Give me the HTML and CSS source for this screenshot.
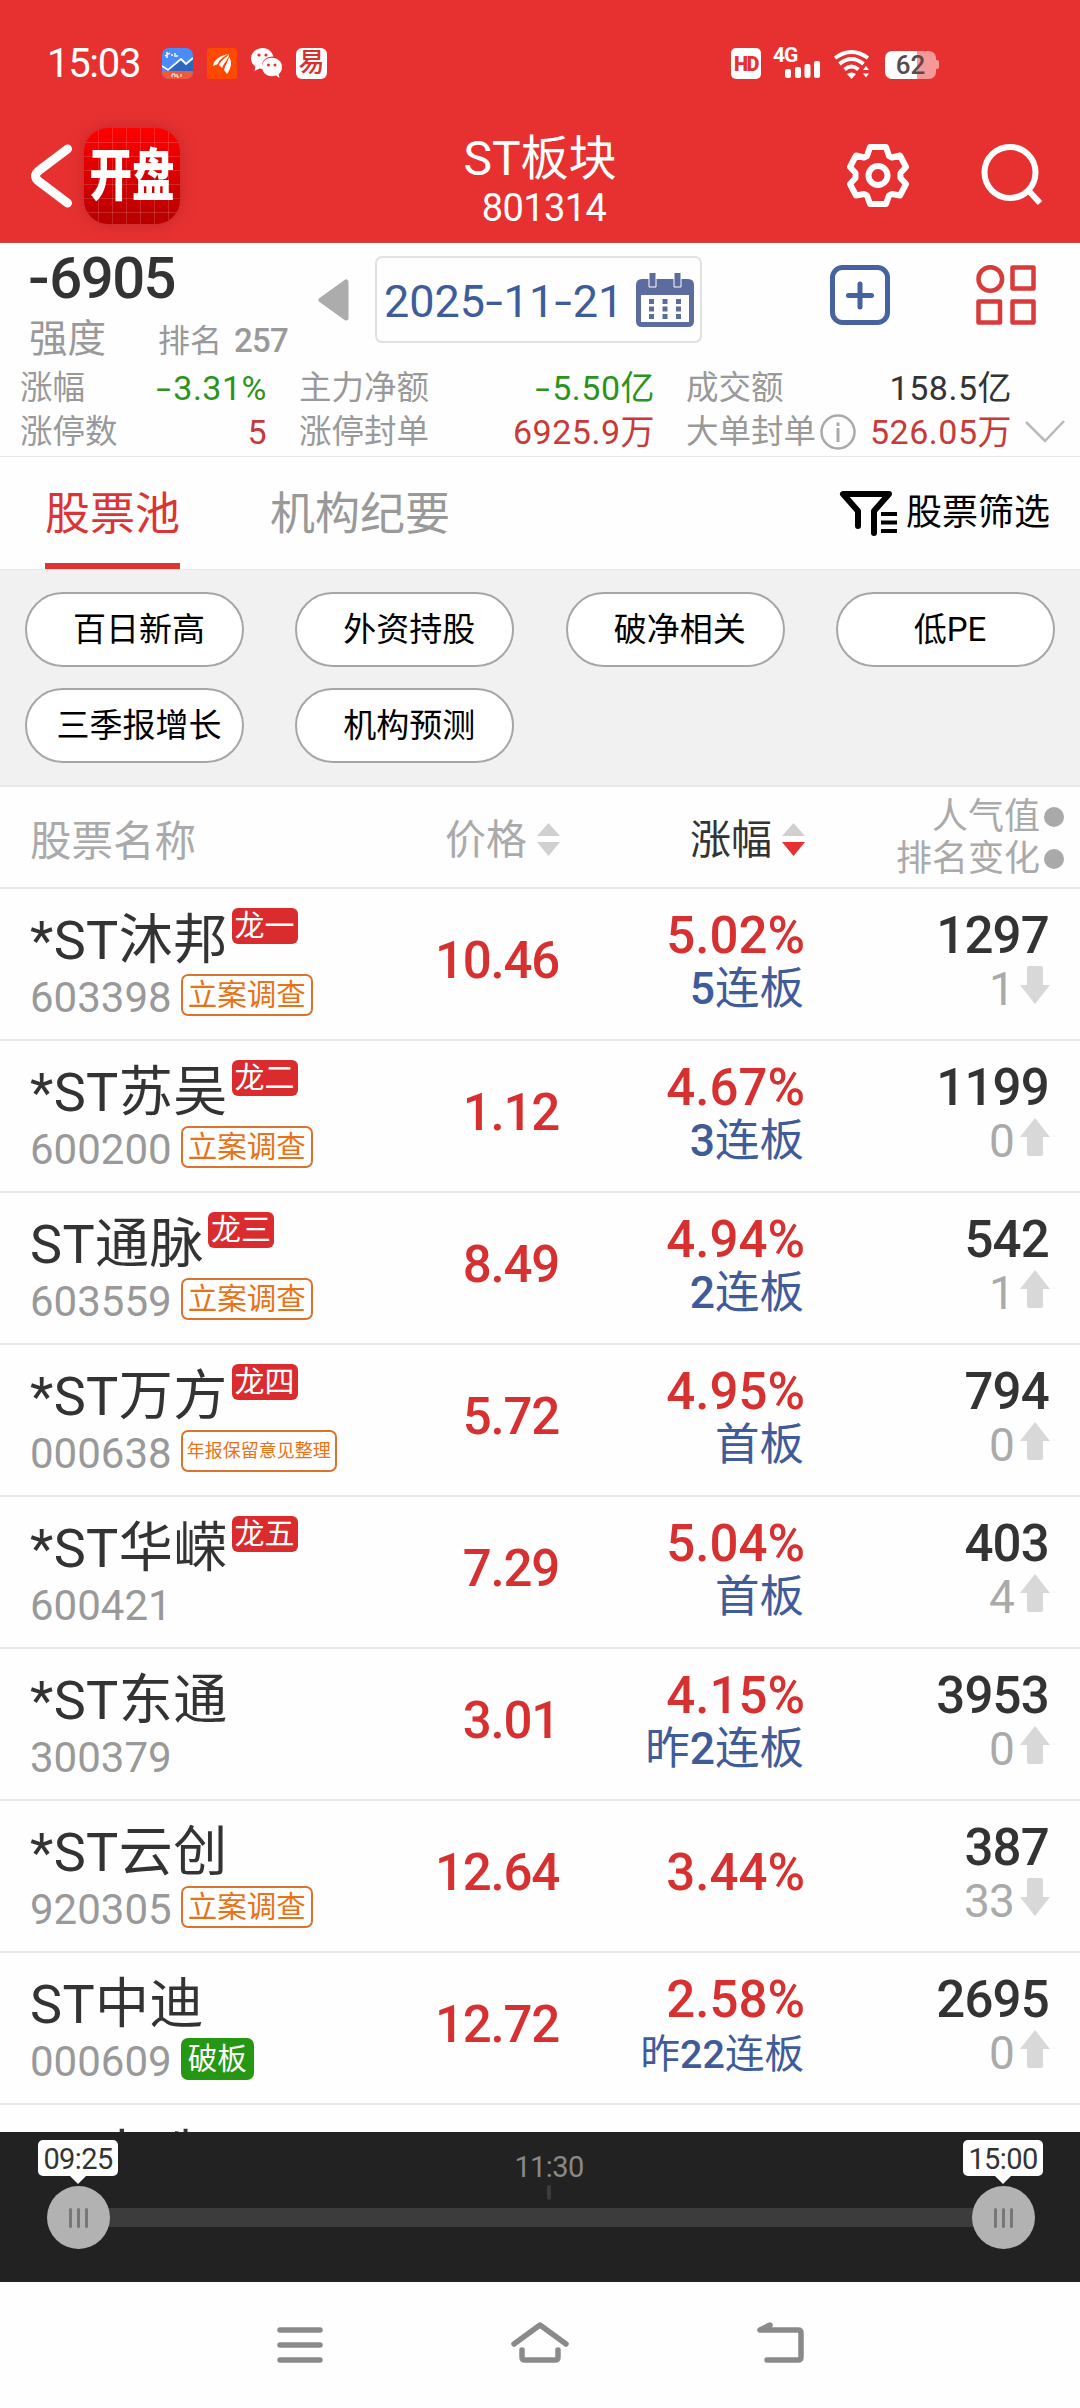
FILE: index.html
```html
<!DOCTYPE html>
<html lang="zh-CN">
<head>
<meta charset="utf-8">
<title>ST板块</title>
<link rel="stylesheet" href="styles.css">
</head>
<body>
<svg class="defs" width="0" height="0">
  <symbol id="sort" viewBox="0 0 23 34"><path class="up" d="M11.5 0 23 13H0z"/><path class="down" d="M0 19h23L11.5 33z"/></symbol>
  <symbol id="arrow-up" viewBox="0 0 30 38"><path d="M15 0 30 19h-7v17q0 2-2 2H9q-2 0-2-2V19H0z"/></symbol>
  <symbol id="arrow-down" viewBox="0 0 30 38"><path d="M15 38 30 19h-7V2q0-2-2-2H9Q7 0 7 2v17H0z"/></symbol>
</svg>

<header class="top">
  <div class="status">
    <span class="clock">15:03</span>
    <span class="apps">
      <svg width="31" height="31" viewBox="0 0 31 31"><defs><clipPath id="r"><rect width="31" height="31" rx="7"/></clipPath></defs><g clip-path="url(#r)"><rect width="31" height="31" fill="#4a8cf7"/><path d="M3 23 19 11l5 5 7-5v12z" fill="#2f66bd"/><path d="M0 18l6 4L19 11l5 5 7-6" fill="none" stroke="#fff" stroke-width="1.8"/><path d="M3 8l5-3m-3-1v6m4-3h2m2-2v4m2-2v2" stroke="#fff" stroke-width="1.4"/><rect y="23" width="31" height="8" fill="#ee5a3a"/><path d="M10 29v-3h3v3m2-3v3h2m2-3v3" stroke="#fff" fill="none"/></g></svg>
      <svg width="30" height="31" viewBox="0 0 30 31"><rect width="30" height="31" rx="3" fill="#ff4800"/><path d="M6 18C7 11 13 8 21 6 16 10 12 11 11 16zM12 17C14 12 18 11 22 6c0 5-5 8-7 14zM17 22c1-5 4-8 5-13 3 4 3 10-2 17z" fill="#fff"/></svg>
      <svg width="31" height="31" viewBox="0 0 31 31" fill="#fff"><path d="M12 0C5 0 0 4.600 0 10.500c0 3.500 2 6.200 4.500 8L3.500 23l5-2.500c1 .3 2 .4 3 .4C9 14 15 8 22.500 8.500 21 3.500 17 0 12 0z"/><path d="M21 9.800c-6 0-10 4-10 9s4 9.500 10 9.500c1.400 0 2.700-.2 4-.7l3.500 2.400-.8-3.800c2-1.700 3.300-4 3.300-7.200 0-5.200-4.300-9.200-10-9.200z"/><g fill="#e73131"><circle cx="8" cy="7" r="1.600"/><circle cx="15" cy="7" r="1.600"/><circle cx="17.500" cy="17" r="1.500"/><circle cx="24" cy="17" r="1.500"/></g></svg>
      <span class="yi">易</span>
    </span>
    <span class="signals">
      <span class="hd">HD</span>
      <span class="cell"><b>4G</b><svg width="36" height="17" viewBox="0 0 36 17" fill="#fff"><rect y="8" width="6" height="9" rx="2"/><rect x="10" y="6" width="6" height="11" rx="2"/><rect x="19.500" y="3" width="6" height="14" rx="2"/><rect x="29" width="6" height="17" rx="2"/></svg></span>
      <svg class="wifi" width="36" height="29" viewBox="0 0 36 29"><g fill="none" stroke="#fff" stroke-width="3.800"><path d="M1 8Q17.500-4 34 8"/><path d="M5.500 14Q17.500 4 29.500 14"/><path d="M10.500 19.500Q17.500 13.500 24.500 19.500"/></g><path d="M13 24q4.500-3 9 0l-4.500 5zM29 20l3-4 3 4zM29 23.500h6l-3 4z" fill="#fff"/></svg>
      <span class="battery"><i></i><b>62</b></span>
    </span>
  </div>
  <div class="titlebar">
    <div class="left">
      <svg width="42" height="64" viewBox="0 0 42 64"><path d="M37.500 5 9 26.500q-7 5.500 0 11L37.500 59" fill="none" stroke="#fff" stroke-width="9" stroke-linecap="round"/></svg>
      <div class="logo"><span>开盘</span></div>
    </div>
    <div class="title"><h1>ST板块</h1><p>801314</p></div>
    <div class="right">
      <svg width="62" height="63" viewBox="0 0 62 63"><g fill="none" stroke="#fff" stroke-width="6" stroke-linejoin="round"><path d="M23 3h16l3 9 3 1.500 8-2 6 11.500-5.500 6v5L59 40l-6 11.500-8-1.500-3 1.500-3 8.500H23l-3-8.500-3-1.500-8 1.500L3 40l5.500-6v-5L3 23 9 11.500l8 2 3-1.500z"/><circle cx="31" cy="31.500" r="9.500"/></g></svg>
      <svg width="62" height="63" viewBox="0 0 62 63"><g fill="none" stroke="#fff" stroke-width="6"><circle cx="29" cy="28.500" r="25.500"/><path d="M47 46 59 59"/></g></svg>
    </div>
  </div>
</header>

<section class="summary">
  <div class="overview">
    <div class="strength">
      <div class="score"><span class="minus">-</span>6905</div>
      <div class="rank"><span class="lbl">强度</span><span class="pos">排名</span><b>257</b></div>
    </div>
    <svg class="prev" width="31" height="42" viewBox="0 0 31 42"><path d="M28 3v36L3 21z" fill="#acacac" stroke="#acacac" stroke-width="5" stroke-linejoin="round"/></svg>
    <div class="date"><span>2025<i class="minus">-</i>11<i class="minus">-</i>21</span>
      <svg width="58" height="54" viewBox="0 0 58 54"><path d="M6 6h46q6 0 6 6v36q0 6-6 6H6q-6 0-6-6V12q0-6 6-6z" fill="#5d6c9e"/><path d="M5 22h48v27H5z" fill="#fff"/><g fill="#5d6c9e" stroke="#fff"><path d="M13-1h7v15h-7zM38-1h7v15h-7z"/></g><path d="M15.500 26v20M29 26v20M42.500 26v20" stroke="#5d6c9e" stroke-width="5" stroke-dasharray="5 2.500"/></svg>
    </div>
    <svg class="add" width="60" height="60" viewBox="0 0 60 60"><g fill="none" stroke="#46629f" stroke-width="5"><rect x="2.500" y="2.500" width="55" height="55" rx="10"/><path d="M30 19.500v23M18.500 31h23" stroke-linecap="round" transform="translate(0 -.5)"/></g></svg>
    <svg class="grid" width="60" height="60" viewBox="0 0 60 60"><g fill="none" stroke="#d73b3b" stroke-width="4.500" stroke-linejoin="round"><circle cx="14.300" cy="14" r="11.800"/><path d="M36.500 2.500h21v21h-21zM2.500 36.500h21.500v21H2.500zM36.500 36.500h21v21h-21z"/></g></svg>
  </div>
  <div class="stats">
    <dl class="s1"><div><dt>涨幅</dt><dd class="green"><span class="minus">-</span>3.31%</dd></div><div><dt>涨停数</dt><dd class="red">5</dd></div></dl>
    <dl class="s2"><div><dt>主力净额</dt><dd class="green"><span class="minus">-</span>5.50亿</dd></div><div><dt>涨停封单</dt><dd class="red">6925.9万</dd></div></dl>
    <dl class="s3"><div><dt>成交额</dt><dd>158.5亿</dd></div><div><dt>大单封单<svg width="36" height="36" viewBox="0 0 36 36"><g fill="none" stroke="#aaa" stroke-width="2.500"><circle cx="18" cy="18" r="16.500"/><path d="M18 14v14M18 8.500v3.500" stroke-width="3"/></g></svg></dt><dd class="red">526.05万</dd></div></dl>
    <svg class="more" width="40" height="24" viewBox="0 0 40 24"><path d="M1 2l19 19L39 1" fill="none" stroke="#b9b9b9" stroke-width="2.500"/></svg>
  </div>
</section>

<nav class="tabs">
  <span class="tab active">股票池</span><span class="tab">机构纪要</span>
  <span class="filter"><svg width="60" height="46" viewBox="0 0 60 46"><path d="M19 35V20L4 3h46L35 20v22" fill="none" stroke="#000" stroke-width="6" stroke-linejoin="round" stroke-linecap="round"/><path d="M42 23h16M42 31.500h16M42 40h16" stroke="#000" stroke-width="4"/></svg>股票筛选</span>
</nav>

<section class="chips">
  <span>百日新高</span><span>外资持股</span><span>破净相关</span><span>低PE</span><span>三季报增长</span><span>机构预测</span>
</section>

<div class="thead">
  <span class="c-name">股票名称</span>
  <span class="c-sort">价格<svg width="23" height="34"><use href="#sort"/></svg></span>
  <span class="c-sort on">涨幅<svg width="23" height="34"><use href="#sort"/></svg></span>
  <span class="c-heat"><span>人气值<i></i></span><span>排名变化<i></i></span></span>
</div>

<main class="list">
  <article><div class="stock"><div class="name">*ST沐邦<em>龙一</em></div><div class="code">603398<span class="tag">立案调查</span></div></div><div class="price">10.46</div><div class="change">5.02%<p><b>5</b>连板</p></div><div class="heat">1297<p>1<svg><use href="#arrow-down"/></svg></p></div></article>
  <article><div class="stock"><div class="name">*ST苏吴<em>龙二</em></div><div class="code">600200<span class="tag">立案调查</span></div></div><div class="price">1.12</div><div class="change">4.67%<p><b>3</b>连板</p></div><div class="heat">1199<p>0<svg><use href="#arrow-up"/></svg></p></div></article>
  <article><div class="stock"><div class="name">ST通脉<em>龙三</em></div><div class="code">603559<span class="tag">立案调查</span></div></div><div class="price">8.49</div><div class="change">4.94%<p><b>2</b>连板</p></div><div class="heat">542<p>1<svg><use href="#arrow-up"/></svg></p></div></article>
  <article><div class="stock"><div class="name">*ST万方<em>龙四</em></div><div class="code">000638<span class="tag long">年报保留意见整理</span></div></div><div class="price">5.72</div><div class="change">4.95%<p>首板</p></div><div class="heat">794<p>0<svg><use href="#arrow-up"/></svg></p></div></article>
  <article><div class="stock"><div class="name">*ST华嵘<em>龙五</em></div><div class="code">600421</div></div><div class="price">7.29</div><div class="change">5.04%<p>首板</p></div><div class="heat">403<p>4<svg><use href="#arrow-up"/></svg></p></div></article>
  <article><div class="stock"><div class="name">*ST东通</div><div class="code">300379</div></div><div class="price">3.01</div><div class="change">4.15%<p>昨<b>2</b>连板</p></div><div class="heat">3953<p>0<svg><use href="#arrow-up"/></svg></p></div></article>
  <article><div class="stock"><div class="name">*ST云创</div><div class="code">920305<span class="tag">立案调查</span></div></div><div class="price">12.64</div><div class="change solo">3.44%</div><div class="heat">387<p>33<svg><use href="#arrow-down"/></svg></p></div></article>
  <article><div class="stock"><div class="name">ST中迪</div><div class="code">000609<span class="tag broken">破板</span></div></div><div class="price">12.72</div><div class="change">2.58%<p class="small">昨<b>22</b>连板</p></div><div class="heat">2695<p>0<svg><use href="#arrow-up"/></svg></p></div></article>
  <article><div class="stock"><div class="name">ST中珠</div></div></article>
</main>

<section class="timeline">
  <div class="track"></div>
  <span class="mark">11:30</span>
  <i class="tick"></i>
  <div class="thumb t1"><b>09:25</b><i></i><i></i><i></i></div>
  <div class="thumb t2"><b>15:00</b><i></i><i></i><i></i></div>
</section>

<footer class="sysnav">
  <svg width="46" height="44" viewBox="0 0 46 44"><path d="M3 8h40M3 23h40M3 38h40"/></svg>
  <svg width="60" height="44" viewBox="0 0 60 44"><path d="M4 22 30 3l26 19M12 28v7q0 3 3 3h30q3 0 3-3v-7"/></svg>
  <svg class="back" width="50" height="44" viewBox="0 0 50 44"><path d="M15 3 5 8h38q3 0 3 3v24q0 3-3 3H12"/></svg>
</footer>
</body>
</html>
```
FILE: styles.css
```css
* { box-sizing: border-box; }
body, h1, p, dl, dd { margin: 0; }
body {
  width: 1080px;
  height: 2408px;
  overflow: hidden;
  display: flex;
  flex-direction: column;
  background: #fefefe;
  color: #333;
  font-family: Roboto, "Noto Sans CJK SC", sans-serif;
  white-space: nowrap;
}
svg { display: block; flex: none; }
.defs { position: absolute; }
em, i { font-style: normal; }
.red { color: #c83a3a; }
.green { color: #2d9320; }
.minus { display: inline-block; transform: scaleX(1.55); margin: 0 4px; }

/* header */
.top { height: 243px; flex: none; background: #e73131; color: #fff; border-bottom: 1px solid #c44; }
.status { height: 126px; display: flex; align-items: center; padding: 0 141px 0 47px; }
.clock { width: 115px; font-size: 40px; letter-spacing: -1.3px; }
.apps { display: flex; gap: 14px; align-items: center; }
.yi { width: 31px; height: 31px; border-radius: 6px; background: #fff; color: #d8302f; font-size: 26px; line-height: 29px; font-weight: 500; text-align: center; }
.signals { margin-left: auto; display: flex; align-items: center; }
.hd { width: 30px; height: 31px; border-radius: 5px; background: #fff; color: #e73131; font-size: 20px; font-weight: 900; line-height: 32px; text-align: center; letter-spacing: -1.5px; }
.cell { width: 48px; height: 30px; margin: 0 12px; position: relative; }
.cell b { position: absolute; left: 0; top: -1px; font-size: 21px; line-height: 17px; letter-spacing: -1px; }
.cell svg { position: absolute; left: 12px; bottom: 0; }
.wifi { margin: 2px 15px 0 1px; }
.battery { position: relative; width: 51px; height: 28px; margin: 3px 3px 0 0; border-radius: 7px; background: linear-gradient(90deg, #fff 62%, #f59898 62%); text-align: center; }
.battery i { position: absolute; right: -3px; top: 9px; width: 3px; height: 9px; background: #f59898; border-radius: 0 2px 2px 0; }
.battery b { display: block; font-size: 26px; line-height: 29px; font-weight: 500; color: #5b4a4a; }
.titlebar { height: 116px; display: grid; grid-template-columns: 1fr auto 1fr; align-items: start; }
.left, .right { height: 99px; display: flex; align-items: center; }
.left { gap: 12px; padding-left: 30px; }
.logo {
  width: 96px; height: 96px; border-radius: 24px; overflow: hidden;
  background:
    repeating-linear-gradient(90deg, transparent 0 13px, #ffffff26 13px 14px) 1px 0,
    repeating-linear-gradient(transparent 0 13px, #ffffff26 13px 14px) 0 1px,
    linear-gradient(#ff0000, #b60000);
  box-shadow: 0 0 14px #a0202088;
}
.logo span { display: block; width: 112px; margin-left: -8px; text-align: center; font-size: 56px; font-weight: 900; line-height: 96px; transform: scaleX(.76); }
.title { text-align: center; padding-top: 5px; }
.title h1 { font-size: 48px; line-height: 56px; font-weight: 400; }
.title p { font-size: 38px; line-height: 42px; letter-spacing: -.6px; margin-left: 8px; }
.right { justify-content: flex-end; gap: 72px; padding-right: 37px; }

/* sector summary */
.summary { height: 214px; flex: none; border-bottom: 1px solid #e6e6e6; }
.overview { height: 123px; display: flex; align-items: flex-start; }
.strength { width: 318px; padding: 5px 0 0 29px; }
.score { font-size: 58px; line-height: 60px; font-weight: 500; letter-spacing: -1.5px; }
.score .minus { transform: scaleX(1.1); margin: 0 2px 0 0; }
.rank { display: flex; align-items: baseline; margin-top: 7px; line-height: 48px; color: #999; font-size: 32px; }
.rank .lbl { width: 129px; font-size: 38.5px; }
.rank b { margin-left: 12px; font-size: 33px; font-weight: 500; letter-spacing: -.8px; }
.prev { margin: 36px 26px 0 0; }
.date { width: 327px; height: 87px; margin-top: 13px; border: 2px solid #e1e1e1; border-radius: 7px; display: flex; align-items: center; justify-content: space-between; padding: 0 6px 0 7px; font-size: 45px; color: #3f5c9a; }
.date .minus { transform: scaleX(1.4); margin: 0 3px; }
.date span { padding-top: 4px; letter-spacing: 0; }
.add { margin: 22px 86px 0 128px; }
.grid { margin-top: 22px; }
.stats { display: flex; font-size: 34px; line-height: 44px; letter-spacing: .5px; }
.stats dl > div { display: flex; justify-content: space-between; }
.stats dt { font-size: 32.5px; color: #999; display: flex; align-items: center; letter-spacing: 0; }
.stats dt svg { margin-left: 4px; }
.s1 { width: 247px; margin-left: 20px; }
.s2 { width: 356px; margin-left: 32px; }
.s3 { width: 326px; margin-left: 31px; }
.more { margin: 54px 0 0 13px; }

/* tabs */
.tabs { height: 113px; flex: none; display: flex; line-height: 115px; padding: 0 30px 0 45px; border-bottom: 1px solid #e8e8e8; }
.tab { font-size: 45px; color: #999; margin-right: 90px; height: 112px; }
.tab.active { color: #dc3434; border-bottom: 6px solid #df3431; }
.filter { margin-left: auto; display: flex; align-items: center; gap: 7px; font-size: 36px; color: #000; line-height: 119px; height: 113px; }

/* quick filters */
.chips { height: 217px; flex: none; background: #f1f1f1; border-bottom: 2px solid #e8e8e8; padding: 22px 25px; display: grid; grid-template-columns: repeat(4, 219px); justify-content: space-between; grid-auto-rows: 75px; row-gap: 21px; }
.chips span { border: 2px solid #a6a6a6; border-radius: 38px; background: #fff; color: #000; font-size: 33px; line-height: 72px; text-align: center; padding-left: 9px; }

/* table head */
.thead, article { display: grid; grid-template-columns: 350px 210px 246px 245px; flex: none; border-bottom: 2px solid #e9e9e9; }
.thead { height: 102px; color: #aaa; font-size: 41px; line-height: 100px; }
.c-name { padding: 5px 0 0 30px; font-size: 41.5px; }
.c-sort { display: flex; align-items: center; justify-content: flex-end; gap: 10px; }
.c-sort svg { fill: #d0d0d0; }
.c-sort.on { color: #333; margin-right: 1px; }
.c-sort.on svg { --down: #e73131; }
.down { fill: var(--down, #d0d0d0); }
.c-heat { display: flex; flex-direction: column; font-size: 36px; line-height: 42px; padding-top: 9px; margin-right: -13px; }
.c-heat span { display: flex; align-items: center; justify-content: flex-end; gap: 4px; }
.c-heat i { width: 20px; height: 20px; border-radius: 50%; background: #a9a9a9; }

/* stock rows */
.list { height: 1243px; flex: none; overflow: hidden; }
article { height: 152px; font-size: 51px; line-height: 58px; font-weight: 500; letter-spacing: -1.2px; text-align: right; }
.stock { padding: 22px 0 0 30px; text-align: left; font-weight: 400; letter-spacing: 0; }
.name { display: flex; font-size: 54px; line-height: 60px; letter-spacing: .4px; }
.name em { height: 36px; margin: -3px 0 0 4px; padding: 0 3px; border-radius: 6px; background: #da2c2f; color: #fff; font-size: 30px; line-height: 35px; letter-spacing: 0; }
.code { display: flex; margin-top: 3px; font-size: 42px; line-height: 48px; color: #999; }
.tag { height: 42px; margin-left: 9px; padding: 0 5px; border: 2px solid #dc732c; border-radius: 7px; font-size: 29.5px; line-height: 38px; color: #e8721a; }
.tag.long { font-size: 18px; padding: 0 4px; }
.tag.broken { background: #269712; border-color: #269712; color: #fff; }
.price { padding: 43px 1px 0 0; color: #d63031; }
.change { padding: 18px 1px 0 0; color: #d63031; letter-spacing: 0; }
.change.solo { padding-top: 43px; }
.change p { padding-right: 1px; font-size: 44.5px; line-height: 48px; font-weight: 400; color: #3f5c99; }
.change p b { font-weight: 500; }
.change p.small { font-size: 39.5px; line-height: 52px; }
.heat { padding: 18px 2px 0 0; letter-spacing: -.8px; }
.heat p { display: flex; justify-content: flex-end; font-size: 46px; line-height: 48px; font-weight: 400; color: #aaa; }
.heat svg { width: 30px; height: 38px; margin: 1px -1px 0 6px; fill: #d8d8d8; }

/* time range slider */
.timeline { position: relative; height: 150px; flex: none; background: #222; font-size: 29px; line-height: 36px; letter-spacing: -.6px; }
.track { position: absolute; left: 78px; right: 77px; top: 76px; height: 19px; background: #3c3c3c; }
.mark { position: absolute; left: 509px; top: 17px; width: 80px; text-align: center; color: #888; }
.tick { position: absolute; left: 547px; top: 53px; width: 4px; height: 15px; border-radius: 2px; background: #3c3c3c; }
.thumb { position: absolute; top: 54px; width: 63px; height: 63px; border-radius: 50%; background: #b2b2b2; display: flex; align-items: center; justify-content: center; gap: 5px; }
.thumb i { width: 3px; height: 20px; border-radius: 2px; background: #777; }
.thumb b { position: absolute; left: -9px; top: -46px; width: 80px; height: 36px; border-radius: 5px; background: #fff; color: #333; font-weight: 400; text-align: center; line-height: 38px; }
.thumb b::after { content: ""; position: absolute; left: 31px; top: 35px; border: 9px solid transparent; border-top-color: #fff; border-bottom: 0; }
.t1 { left: 47px; }
.t2 { left: 972px; }

/* system navigation */
.sysnav { flex: 1; display: flex; gap: 187px; padding: 40px 0 0 277px; background: #fefefe; }
.sysnav path { fill: none; stroke: #8a8a8a; stroke-width: 5.500; stroke-linecap: round; stroke-linejoin: round; }
.sysnav .back { margin-left: -2px; }
```
